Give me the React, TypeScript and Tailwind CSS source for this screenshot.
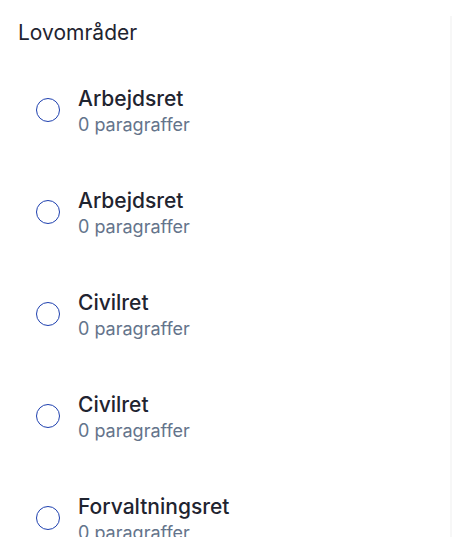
import React from "react";

const items = [
  "Arbejdsret",
  "Arbejdsret",
  "Civilret",
  "Civilret",
  "Forvaltningsret",
  "Forvaltningsret",
];

export default function App() {
  return (
    <div
      className="relative h-[537px] w-[452px] overflow-hidden bg-white"
      style={{ fontFamily: "Inter, 'Noto Sans', sans-serif" }}
    >
      <div className="absolute right-0 top-[16px] bottom-0 w-[2px] bg-[#f7f7f7]" />
      <div className="px-[18px] pt-[19px]">
        <h2 className="text-[21px] leading-[28px] font-normal text-[#1f2430]">Lovområder</h2>
        <ul className="mt-[12px] flex flex-col">
          {items.map((name, i) => (
            <li key={i} className="flex h-[102px] shrink-0 items-center gap-[18px] pl-[18px]">
              <span className="h-[24px] w-[24px] shrink-0 rounded-full border-[1.5px] border-[#1e40af]" />
              <div className="flex flex-col pt-[3px]">
                <span className="text-[21px] leading-[26px] font-medium text-[#1f2430]">{name}</span>
                <span className="text-[18px] leading-[26px] text-[#64748b]">0 paragraffer</span>
              </div>
            </li>
          ))}
        </ul>
      </div>
    </div>
  );
}
